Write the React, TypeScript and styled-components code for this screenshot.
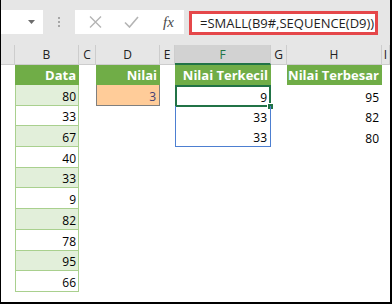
import React from 'react';
import styled, { createGlobalStyle, css } from 'styled-components';

const GlobalStyle = createGlobalStyle`
  html, body {
    margin: 0;
    padding: 0;
    background: #fff;
  }
  body {
    font-family: 'Open Sans', 'Liberation Sans', sans-serif;
  }
`;

type Kind = 'empty' | 'head' | 'band' | 'input' | 'spill' | 'value';

interface CellSpec {
  kind: Kind;
  text?: string | number;
  shade?: boolean;
  last?: boolean;
  active?: boolean;
}

const COLUMNS = ['', 'B', 'C', 'D', 'E', 'F', 'G', 'H', 'I'];
const SELECTED_COLUMN = 'F';

const data = [80, 33, 67, 40, 33, 9, 82, 78, 95, 66];
const smallest = [9, 33, 33];
const largest = [95, 82, 80];

const getCell = (row: number, col: string): CellSpec => {
  if (col === 'B') {
    if (row === 0) return { kind: 'head', text: 'Data' };
    return { kind: 'band', text: data[row - 1], shade: row % 2 === 1 };
  }
  if (col === 'D') {
    if (row === 0) return { kind: 'head', text: 'Nilai' };
    if (row === 1) return { kind: 'input', text: 3 };
  }
  if (col === 'F') {
    if (row === 0) return { kind: 'head', text: 'Nilai Terkecil' };
    if (row <= smallest.length)
      return {
        kind: 'spill',
        text: smallest[row - 1],
        last: row === smallest.length,
        active: row === 1,
      };
  }
  if (col === 'H') {
    if (row === 0) return { kind: 'head', text: 'Nilai Terbesar' };
    if (row <= largest.length) return { kind: 'value', text: largest[row - 1] };
  }
  return { kind: 'empty' };
};

export default function App() {
  const rows = Array.from({ length: 11 }, (_, i) => i);

  return (
    <>
      <GlobalStyle />
      <Frame>
        <Toolbar>
          <NameBox>
            <svg width="8" height="5" viewBox="0 0 8 5">
              <path d="M0 0h7L3.5 4z" fill="#6b6b6b" />
            </svg>
          </NameBox>
          <Grip>
            <i />
            <i />
            <i />
          </Grip>
          <FuncBox>
            <svg width="13" height="12" viewBox="0 0 13 12">
              <path d="M1 0.5l11 11M12 0.5l-11 11" stroke="#b4b4b4" strokeWidth="1.4" fill="none" />
            </svg>
            <svg width="15" height="12" viewBox="0 0 15 12">
              <path d="M1 6.5l4.5 4.5L14 1" stroke="#b4b4b4" strokeWidth="1.6" fill="none" />
            </svg>
            <Fx>fx</Fx>
          </FuncBox>
          <FormulaBox>=SMALL(B9#,SEQUENCE(D9))</FormulaBox>
        </Toolbar>

        <Sheet>
          {COLUMNS.map((c) => (
            <ColHead key={c || 'corner'} $selected={c === SELECTED_COLUMN}>
              {c}
            </ColHead>
          ))}
          {rows.map((r) =>
            COLUMNS.map((c) => {
              const cell = getCell(r, c);
              return (
                <Cell
                  key={`${c}${r}`}
                  $kind={cell.kind}
                  $shade={!!cell.shade}
                  $last={!!cell.last}
                >
                  {cell.text}
                  {cell.active && (
                    <ActiveFrame>
                      <FillHandle />
                    </ActiveFrame>
                  )}
                </Cell>
              );
            })
          )}
        </Sheet>
      </Frame>
    </>
  );
}

// Styling
const Frame = styled.div`
  width: 392px;
  height: 304px;
  box-sizing: border-box;
  border-left: 1px solid #000;
  border-right: 2px solid #000;
  border-bottom: 2px solid #000;
  background: #fff;
  overflow: hidden;
  display: flex;
  flex-direction: column;
`;

const Toolbar = styled.div`
  height: 45px;
  flex-shrink: 0;
  background: #e6e6e6;
  display: flex;
  align-items: flex-start;
  padding-top: 10px;
  box-sizing: border-box;
`;

const NameBox = styled.div`
  width: 42px;
  height: 24px;
  background: #fff;
  display: flex;
  align-items: center;
  justify-content: flex-end;
  padding-right: 7px;
  box-sizing: border-box;
`;

const Grip = styled.div`
  width: 32px;
  height: 24px;
  display: flex;
  flex-direction: column;
  align-items: center;
  justify-content: center;
  gap: 2px;

  i {
    width: 2px;
    height: 2px;
    background: #a6a6a6;
  }
`;

const FuncBox = styled.div`
  width: 109px;
  height: 24px;
  background: #fff;
  display: flex;
  align-items: center;
  padding-left: 14px;
  gap: 22px;
  box-sizing: border-box;
`;

const Fx = styled.span`
  font-family: 'Liberation Serif', 'DejaVu Serif', serif;
  font-style: italic;
  font-size: 15px;
  color: #4a4a4a;
  margin-left: 2px;
`;

const FormulaBox = styled.div`
  margin-left: 5px;
  margin-top: 1px;
  width: 189px;
  height: 24px;
  box-sizing: border-box;
  border: 3px solid #e5474a;
  background: #fff;
  display: flex;
  align-items: center;
  padding-left: 8px;
  font-size: 13px;
  color: #1e1e1e;
  white-space: nowrap;
`;

const Sheet = styled.div`
  display: grid;
  grid-template-columns: 14px 64px 17px 64px 15px 96px 16px 95px 1fr;
  grid-template-rows: 20px 20px repeat(10, 20.7px);
  overflow: hidden;
`;

const ColHead = styled.div<{ $selected: boolean }>`
  background: #e6e6e6;
  border-right: 1px solid #cdcdcd;
  border-bottom: 1px solid #cdcdcd;
  box-sizing: border-box;
  display: flex;
  align-items: center;
  justify-content: center;
  font-size: 12px;
  color: #222;

  ${(p) =>
    p.$selected &&
    css`
      background: #d2d2d2;
      color: #217346;
      border-bottom: 2px solid #217346;
    `}
`;

const Cell = styled.div<{ $kind: Kind; $shade: boolean; $last: boolean }>`
  position: relative;
  box-sizing: border-box;
  display: flex;
  align-items: flex-end;
  justify-content: flex-end;
  padding-right: 2px;
  font-size: 12px;
  line-height: 16px;
  color: #000;
  white-space: nowrap;

  ${(p) =>
    p.$kind === 'head' &&
    css`
      background: #70ad47;
      color: #fff;
      font-weight: 700;
      font-size: 13px;
      line-height: 17px;
      align-items: center;
      padding-right: 3px;
    `}

  ${(p) =>
    p.$kind === 'band' &&
    css`
      background: ${p.$shade ? '#e2efda' : '#fff'};
      border: 1px solid #a9d08e;
      border-top: none;
    `}

  ${(p) =>
    p.$kind === 'input' &&
    css`
      background: #ffcc99;
      border: 1px solid #7f7f7f;
      border-top: none;
      color: #3f3f76;
      padding-right: 3px;
    `}

  ${(p) =>
    p.$kind === 'spill' &&
    css`
      border-left: 1px solid #4d7fd1;
      border-right: 1px solid #4d7fd1;
      border-bottom: ${p.$last ? '1px solid #4d7fd1' : 'none'};
      padding-right: 3px;
    `}

  ${(p) =>
    p.$kind === 'value' &&
    css`
      padding-right: 3px;
    `}
`;

const ActiveFrame = styled.span`
  position: absolute;
  left: -1px;
  right: -1px;
  top: 0;
  bottom: -1px;
  border: 2px solid #217346;
`;

const FillHandle = styled.span`
  position: absolute;
  right: -5px;
  bottom: -5px;
  width: 5px;
  height: 5px;
  background: #217346;
  border: 1px solid #fff;
`;
